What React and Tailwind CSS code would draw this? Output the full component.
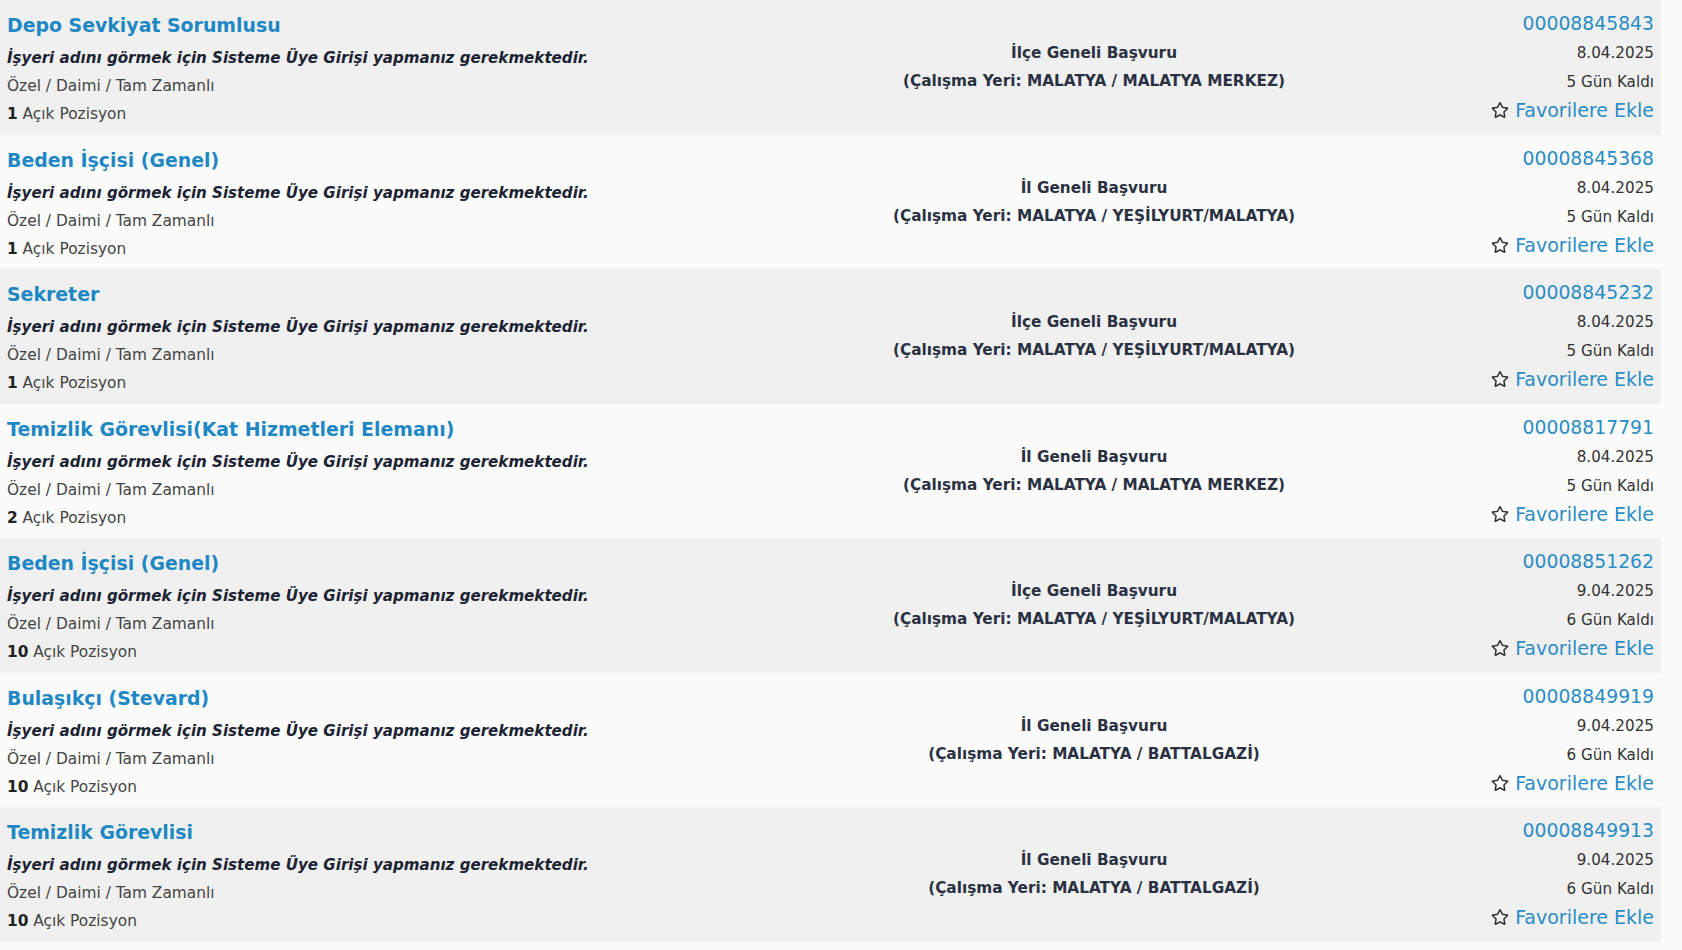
import { FaRegStar } from "react-icons/fa";

const ilanlar = [
  { baslik: "Depo Sevkiyat Sorumlusu", tur: "İlçe Geneli Başvuru", yer: "MALATYA / MALATYA MERKEZ", no: "00008845843", tarih: "8.04.2025", kalan: "5 Gün Kaldı", adet: "1" },
  { baslik: "Beden İşçisi (Genel)", tur: "İl Geneli Başvuru", yer: "MALATYA / YEŞİLYURT/MALATYA", no: "00008845368", tarih: "8.04.2025", kalan: "5 Gün Kaldı", adet: "1" },
  { baslik: "Sekreter", tur: "İlçe Geneli Başvuru", yer: "MALATYA / YEŞİLYURT/MALATYA", no: "00008845232", tarih: "8.04.2025", kalan: "5 Gün Kaldı", adet: "1" },
  { baslik: "Temizlik Görevlisi(Kat Hizmetleri Elemanı)", tur: "İl Geneli Başvuru", yer: "MALATYA / MALATYA MERKEZ", no: "00008817791", tarih: "8.04.2025", kalan: "5 Gün Kaldı", adet: "2" },
  { baslik: "Beden İşçisi (Genel)", tur: "İlçe Geneli Başvuru", yer: "MALATYA / YEŞİLYURT/MALATYA", no: "00008851262", tarih: "9.04.2025", kalan: "6 Gün Kaldı", adet: "10" },
  { baslik: "Bulaşıkçı (Stevard)", tur: "İl Geneli Başvuru", yer: "MALATYA / BATTALGAZİ", no: "00008849919", tarih: "9.04.2025", kalan: "6 Gün Kaldı", adet: "10" },
  { baslik: "Temizlik Görevlisi", tur: "İl Geneli Başvuru", yer: "MALATYA / BATTALGAZİ", no: "00008849913", tarih: "9.04.2025", kalan: "6 Gün Kaldı", adet: "10" },
];

function IlanSatiri({ ilan, gri }) {
  return (
    <div className={`flex h-[134.5px] ${gri ? "bg-[#f0f0f0]" : ""}`}>
      <div className="w-[830px] pl-[7px] pt-[13px]">
        <a className="block text-[18.9px] font-bold leading-[24px] text-[#1f88c4]">{ilan.baslik}</a>
        <p className="mt-[11px] text-[15.1px] font-bold italic leading-[20px] text-[#1c2333]">
          İşyeri adını görmek için Sisteme Üye Girişi yapmanız gerekmektedir.
        </p>
        <p className="mt-[8px] text-[15.4px] leading-[20px] text-[#444]">Özel / Daimi / Tam Zamanlı</p>
        <p className="mt-[8px] text-[15.4px] leading-[20px] text-[#444]">
          <span className="font-bold text-[#222]">{ilan.adet}</span> Açık Pozisyon
        </p>
      </div>
      <div className="flex w-[528px] flex-col justify-center text-center text-[15.3px] font-bold leading-[28px] text-[#2a3142]">
        <p>{ilan.tur}</p>
        <p>(Çalışma Yeri: {ilan.yer})</p>
      </div>
      <div className="flex flex-1 flex-col items-end pr-[7px] pt-[12px] text-right">
        <a className="text-[18.8px] leading-[24px] text-[#2a8cc4]">{ilan.no}</a>
        <p className="mt-[5px] text-[15.2px] leading-[24px] text-[#333]">{ilan.tarih}</p>
        <p className="mt-[5px] text-[15.2px] leading-[24px] text-[#333]">{ilan.kalan}</p>
        <a className="mt-[4px] flex items-center gap-[6px] text-[19px] leading-[24px] text-[#2a8cc4]">
          <FaRegStar className="text-[18px] text-[#333]" />
          Favorilere Ekle
        </a>
      </div>
    </div>
  );
}

export default function App() {
  return (
    <div className="min-h-[950px] bg-[#fbfbfb] font-['DejaVu_Sans',Verdana,sans-serif]">
      <div className="w-[1661px]">
        {ilanlar.map((ilan, i) => (
          <IlanSatiri key={i} ilan={ilan} gri={i % 2 === 0} />
        ))}
      </div>
    </div>
  );
}
